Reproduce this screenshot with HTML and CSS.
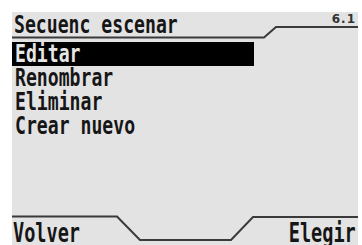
FILE: index.html
```html
<!DOCTYPE html>
<html lang="es">
<head>
  <meta charset="UTF-8" />
  <title>Secuenc escenar</title>
  <link rel="stylesheet" href="styles.css">
</head>
<body>
  <div class="screen">
    <svg class="frame" width="346" height="233" viewBox="0 0 346 233">
      <path d="M0 25.5 H252 L264 15 H346" />
      <path d="M0 204.5 H105 L128 228 H219 L241 205 H346" />
    </svg>

    <div class="header">
      <span class="txt">Secuenc escenar</span>
      <span class="version">6.1</span>
    </div>

    <ul class="menu">
      <li class="selected"><span class="txt">Editar</span></li>
      <li><span class="txt">Renombrar</span></li>
      <li><span class="txt">Eliminar</span></li>
      <li><span class="txt">Crear nuevo</span></li>
    </ul>

    <div class="footer">
      <span class="txt">Volver</span>
      <span class="txt right">Elegir</span>
    </div>
  </div>
</body>
</html>
```

FILE: styles.css
```css
body {
  margin: 0;
  background-color: #ffffff;
  font-family: "DejaVu Sans Mono", monospace;
  font-weight: bold;
  color: #161616;
}

.screen {
  position: relative;
  margin: 12px 0 0 12px;
  width: 346px;
  height: 233px;
  background-color: #e3e3e3;
  display: flex;
  flex-direction: column;
  overflow: hidden;
}

/* lineas del marco (pestañas arriba y abajo) */
.frame {
  position: absolute;
  left: 0;
  top: 0;
}

.frame path {
  fill: none;
  stroke: #3a3a3a;
  stroke-width: 2;
}

.txt {
  display: inline-block;
  transform: scaleX(0.74);
  transform-origin: left center;
  white-space: nowrap;
}

.header {
  height: 30px;
  box-sizing: border-box;
  padding: 1px 2px 0 2px;
  display: flex;
  justify-content: space-between;
  align-items: flex-start;
  font-size: 24.5px;
  line-height: 24px;
}

.version {
  font-family: "DejaVu Sans", sans-serif;
  font-size: 12px;
  line-height: 12px;
  letter-spacing: 1px;
  color: #333;
}

.menu {
  list-style: none;
  margin: 0;
  padding: 0;
  font-size: 24.5px;
  line-height: 24px;
}

.menu li {
  width: 242px;
  height: 24px;
  padding-left: 3px;
  box-sizing: border-box;
}

.menu li.selected {
  background-color: #000;
  color: #e6e6e6;
}

.footer {
  margin-top: auto;
  height: 25px;
  padding: 0 2px 0 1px;
  display: flex;
  justify-content: space-between;
  font-size: 26.5px;
  line-height: 25px;
}

.footer .txt {
  transform: scaleX(0.7);
}

.footer .right {
  transform-origin: right center;
}
```
